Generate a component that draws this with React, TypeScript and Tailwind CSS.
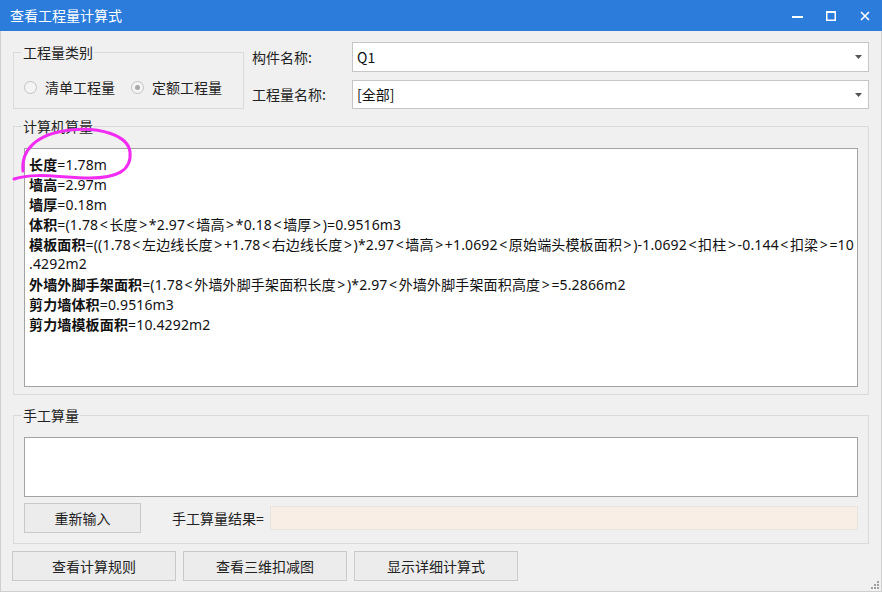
import React from 'react';

const formulaLines: [string, string][] = [
  ['长度', '=1.78m'],
  ['墙高', '=2.97m'],
  ['墙厚', '=0.18m'],
  ['体积', '=(1.78<长度>*2.97<墙高>*0.18<墙厚>)=0.9516m3'],
  ['模板面积', '=((1.78<左边线长度>+1.78<右边线长度>)*2.97<墙高>+1.0692<原始端头模板面积>)-1.0692<扣柱>-0.144<扣梁>=10'],
  ['', '.4292m2'],
  ['外墙外脚手架面积', '=(1.78<外墙外脚手架面积长度>)*2.97<外墙外脚手架面积高度>=5.2866m2'],
  ['剪力墙体积', '=0.9516m3'],
  ['剪力墙模板面积', '=10.4292m2'],
];

// brackets in the original font carry extra side bearing
const renderFormula = (s: string) =>
  s.split(/([<>])/).map((part, i) =>
    part === '<' || part === '>' ? (
      <span key={i} className="mx-[1.5px]">{part}</span>
    ) : (
      <span key={i}>{part}</span>
    )
  );

const Radio: React.FC<{ checked?: boolean; label: string }> = ({ checked, label }) => (
  <div className="flex items-center gap-[8px]">
    <div className="w-[13px] h-[13px] rounded-full border border-[#c2c2c2] bg-[#f4f4f4] flex items-center justify-center">
      {checked && <div className="w-[5px] h-[5px] rounded-full bg-[#a8a8a8]" />}
    </div>
    <span className="text-[14px] leading-[20px] text-[#222]">{label}</span>
  </div>
);

const Combo: React.FC<{ value: string; h: string }> = ({ value, h }) => (
  <div className={`w-[517px] ${h} bg-white border border-[#c6c6c6] flex items-center justify-between pl-[4px] pr-[6px]`}>
    <span className="text-[14px] text-[#111]">{value}</span>
    <svg width="7" height="4" viewBox="0 0 7 4">
      <path d="M0 0 L7 0 L3.5 4 Z" fill="#555" />
    </svg>
  </div>
);

const Button: React.FC<{ label: string; className?: string }> = ({ label, className }) => (
  <button className={`bg-[#ececec] border border-[#c9c9c9] text-[14px] text-[#222] flex items-center justify-center ${className ?? ''}`}>
    {label}
  </button>
);

export default function App() {
  return (
    <div className="w-[882px] h-[593px] bg-white font-['Noto_Sans_CJK_SC',sans-serif] relative overflow-hidden">
      <div className="w-[882px] h-[592px] flex flex-col bg-[#f0f0f0] border-x border-b border-[#cfcfcf]">
        {/* title bar */}
        <div className="h-[31px] shrink-0 bg-[#2b7cdb] flex items-center justify-between pl-[10px] -mx-px">
          <span className="text-white text-[14px]">查看工程量计算式</span>
          <div className="flex items-center h-full">
            <div className="w-[34px] h-full flex items-center justify-center">
              <svg width="11" height="11" viewBox="0 0 11 11"><rect x="0" y="6" width="11" height="2" fill="#fff" /></svg>
            </div>
            <div className="w-[34px] h-full flex items-center justify-center">
              <svg width="10" height="10" viewBox="0 0 10 10"><rect x="0.75" y="0.75" width="8.5" height="8.5" fill="none" stroke="#fff" strokeWidth="1.5" /><rect x="0" y="0" width="10" height="2" fill="#fff" /></svg>
            </div>
            <div className="w-[34px] h-full flex items-center justify-center">
              <svg width="10" height="10" viewBox="0 0 10 10"><path d="M1 1 L9 9 M9 1 L1 9" stroke="#fff" strokeWidth="1.6" /></svg>
            </div>
          </div>
        </div>

        {/* body */}
        <div className="flex-1 flex flex-col pl-[12px] pr-[12px] pt-[11px]">
          {/* top row */}
          <div className="flex">
            <fieldset className="w-[233px] border border-[#dadada] px-[10px] pt-[15px] pb-[11px]">
              <legend className="-ml-[2px] px-[1px] text-[14px] leading-[20px] text-[#222]">工程量类别</legend>
              <div className="flex items-center gap-[16px]">
                <Radio label="清单工程量" />
                <Radio label="定额工程量" checked />
              </div>
            </fieldset>
            <div className="ml-[8px] flex flex-col gap-[8px]">
              <div className="flex items-center">
                <span className="w-[100px] text-[14px] text-[#222]">构件名称:</span>
                <Combo value="Q1" h="h-[30px]" />
              </div>
              <div className="flex items-center">
                <span className="w-[100px] text-[14px] text-[#222]">工程量名称:</span>
                <Combo value="[全部]" h="h-[29px]" />
              </div>
            </div>
          </div>

          {/* computer quantities */}
          <fieldset className="mt-[7px] border border-[#dadada] px-[10px] pt-[12px] pb-[7px]">
            <legend className="-ml-[2px] px-[1px] text-[14px] leading-[20px] text-[#222]">计算机算量</legend>
            <div className="h-[239px] bg-white border border-[#a3a3a3] pl-[4px] pt-[5px] overflow-hidden">
              {formulaLines.map(([label, rest], i) => (
                <div key={i} className="flex items-baseline h-[20px] leading-[20px] font-['Noto_Sans','Noto_Sans_CJK_SC',sans-serif] text-[14px] text-[#111] whitespace-nowrap tracking-[0.15px]">
                  {label && <span className="font-bold font-['Noto_Sans_CJK_SC',sans-serif]">{label}</span>}
                  <span>{renderFormula(rest)}</span>
                </div>
              ))}
            </div>
          </fieldset>

          {/* manual quantities */}
          <fieldset className="mt-[10px] border border-[#dadada] px-[10px] pt-[12px] pb-[10px]">
            <legend className="-ml-[2px] px-[1px] text-[14px] leading-[20px] text-[#222]">手工算量</legend>
            <div className="h-[60px] bg-white border border-[#a3a3a3]" />
            <div className="mt-[6px] flex items-center">
              <Button label="重新输入" className="w-[117px] h-[30px]" />
              <span className="ml-[31px] text-[14px] text-[#222]">手工算量结果=</span>
              <div className="ml-[6px] flex-1 h-[24px] bg-[#f9eee5] border border-[#e8e4e0]" />
            </div>
          </fieldset>

          {/* bottom buttons */}
          <div className="mt-[7px] -ml-px flex gap-[7px]">
            <Button label="查看计算规则" className="w-[164px] h-[30px]" />
            <Button label="查看三维扣减图" className="w-[164px] h-[30px]" />
            <Button label="显示详细计算式" className="w-[164px] h-[30px]" />
          </div>
        </div>
      </div>

      {/* resize grip */}
      <svg className="absolute right-[3px] bottom-[4px]" width="8" height="8" viewBox="0 0 8 8">
        <rect x="6" y="0" width="2" height="2" fill="#a0a0a0" />
        <rect x="3" y="3" width="2" height="2" fill="#a0a0a0" />
        <rect x="6" y="3" width="2" height="2" fill="#a0a0a0" />
        <rect x="0" y="6" width="2" height="2" fill="#a0a0a0" />
        <rect x="3" y="6" width="2" height="2" fill="#a0a0a0" />
        <rect x="6" y="6" width="2" height="2" fill="#a0a0a0" />
      </svg>

      {/* hand-drawn annotation */}
      <svg className="absolute left-0 top-0 pointer-events-none" width="882" height="593" viewBox="0 0 882 593">
        <path
          d="M23 171 C21 150 36 134 70 130 C100 127 128 135 130 152 C132 171 116 178 90 178 C62 178 36 172 14 179"
          fill="none"
          stroke="#f22cf2"
          strokeWidth="3"
          strokeLinecap="round"
        />
      </svg>
    </div>
  );
}
